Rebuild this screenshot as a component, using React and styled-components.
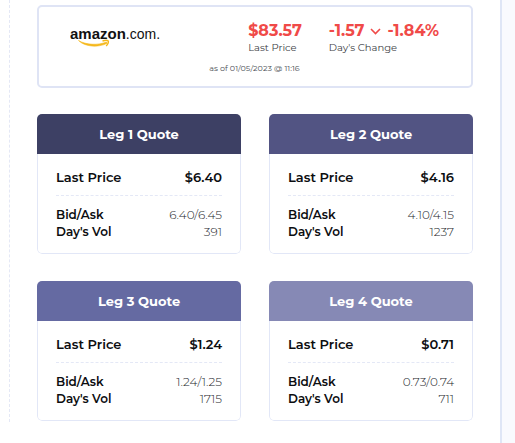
import React from 'react';
import styled, { createGlobalStyle } from 'styled-components';

const GlobalStyle = createGlobalStyle`
  * {
    box-sizing: border-box;
  }

  body {
    margin: 0;
    background-color: #f9fafe;
    color: #0c0d10;
    font-family: Montserrat, Inter, sans-serif;
    font-size: 13px;
  }

  h2, p, dl, dt, dd {
    margin: 0;
  }
`;

const Page = styled.main`
  display: flex;
  min-height: 100vh;
  margin-right: 13px;
  padding: 0 27px 21px 9px;
  background-color: #fff;
  border-right: 2px solid #dfe6f6;
`;

const Content = styled.div`
  flex: 1;
  padding: 5px 0 0 27px;
  border-left: 1px dashed #e4e8f6;
`;

const SummaryCard = styled.section`
  padding: 14px 32px 13px 31px;
  border: 2px solid #dfe4f5;
  border-radius: 5px;
`;

const SummaryTop = styled.div`
  display: flex;
  justify-content: space-between;
  align-items: flex-start;
`;

const Logo = styled.svg`
  display: block;
  width: 94px;
  height: 28px;
`;

const Stats = styled.dl`
  display: flex;
  gap: 27px;
`;

const Stat = styled.div`
  display: flex;
  flex-direction: column-reverse;

  dt {
    color: #3c3e45;
    font-size: 10px;
    line-height: 14px;
  }

  dd {
    display: flex;
    align-items: center;
    gap: 6px;
    color: #f04a48;
    font-size: 16px;
    font-weight: 700;
    line-height: 20px;
  }
`;

const AsOf = styled.p`
  margin-top: 8px;
  color: #4c4e55;
  font-size: 8px;
  line-height: 10px;
  text-align: center;
`;

const Legs = styled.div`
  display: grid;
  grid-template-columns: 1fr 1fr;
  gap: 27px 28px;
  margin-top: 26px;
`;

const LegCard = styled.section`
  overflow: hidden;
  border-radius: 5px;
`;

const LegTitle = styled.h2`
  background-color: ${({ $color }) => $color};
  color: #fff;
  font-size: 13px;
  font-weight: 700;
  line-height: 40px;
  text-align: center;
`;

const LegBody = styled.dl`
  padding: 13px 18px;
  border: 1px solid #e2e7f7;
  border-top: 0;
  border-radius: 0 0 5px 5px;
`;

const Row = styled.div`
  display: flex;
  justify-content: space-between;
  font-size: 12px;
  line-height: 17px;

  dt {
    font-weight: 600;
  }

  dd {
    color: #26272c;
    font-weight: 300;
  }
`;

const PriceRow = styled(Row)`
  margin-bottom: 10px;
  padding-bottom: 8px;
  border-bottom: 1px dashed #e4e8f6;
  font-size: 13px;
  line-height: 20px;

  dd {
    color: #0c0d10;
    font-weight: 600;
  }
`;

const legs = [
  { name: 'Leg 1 Quote', color: '#3d4064', price: '$6.40', bidAsk: '6.40/6.45', volume: '391' },
  { name: 'Leg 2 Quote', color: '#525483', price: '$4.16', bidAsk: '4.10/4.15', volume: '1237' },
  { name: 'Leg 3 Quote', color: '#656aa2', price: '$1.24', bidAsk: '1.24/1.25', volume: '1715' },
  { name: 'Leg 4 Quote', color: '#8689b5', price: '$0.71', bidAsk: '0.73/0.74', volume: '711' },
];

const AmazonLogo = () => (
  <Logo viewBox="0 0 94 28" role="img" aria-label="amazon.com">
    <text x="0" y="18" fill="#111" fontFamily="'Liberation Sans', sans-serif">
      <tspan fontSize="15" fontWeight="700">amazon</tspan><tspan fontSize="14">.com.</tspan>
    </text>
    <path d="M8.5 19.5 C16 24 28 24.5 36.5 21 L37.2 22.3 C28 26.8 15 26 8.5 19.5Z" fill="#f5b81c" stroke="#f5b81c" strokeWidth="0.6" />
    <path d="M32.5 20 C35 19.2 37.5 19.2 38.2 19.9 C38.7 21 37.6 23.5 36.2 25" fill="none" stroke="#f5b81c" strokeWidth="1.4" />
  </Logo>
);

const ChevronDown = () => (
  <svg width="11" height="7" viewBox="0 0 11 7" fill="none" stroke="#f04a48" strokeWidth="1.6" aria-hidden="true">
    <path d="M1 1 L5.5 5.5 L10 1" />
  </svg>
);

const LegQuote = ({ leg }) => (
  <LegCard>
    <LegTitle $color={leg.color}>{leg.name}</LegTitle>
    <LegBody>
      <PriceRow>
        <dt>Last Price</dt>
        <dd>{leg.price}</dd>
      </PriceRow>
      <Row>
        <dt>Bid/Ask</dt>
        <dd>{leg.bidAsk}</dd>
      </Row>
      <Row>
        <dt>Day's Vol</dt>
        <dd>{leg.volume}</dd>
      </Row>
    </LegBody>
  </LegCard>
);

const App = () => {
  return (
    <>
      <GlobalStyle />
      <Page>
        <Content>
          <SummaryCard>
            <SummaryTop>
              <AmazonLogo />
              <Stats>
                <Stat>
                  <dt>Last Price</dt>
                  <dd>$83.57</dd>
                </Stat>
                <Stat>
                  <dt>Day's Change</dt>
                  <dd>
                    <span>-1.57</span>
                    <ChevronDown />
                    <span>-1.84%</span>
                  </dd>
                </Stat>
              </Stats>
            </SummaryTop>
            <AsOf>as of 01/05/2023 @ 11:16</AsOf>
          </SummaryCard>
          <Legs>
            {legs.map((leg) => (
              <LegQuote key={leg.name} leg={leg} />
            ))}
          </Legs>
        </Content>
      </Page>
    </>
  );
};

export default App;
